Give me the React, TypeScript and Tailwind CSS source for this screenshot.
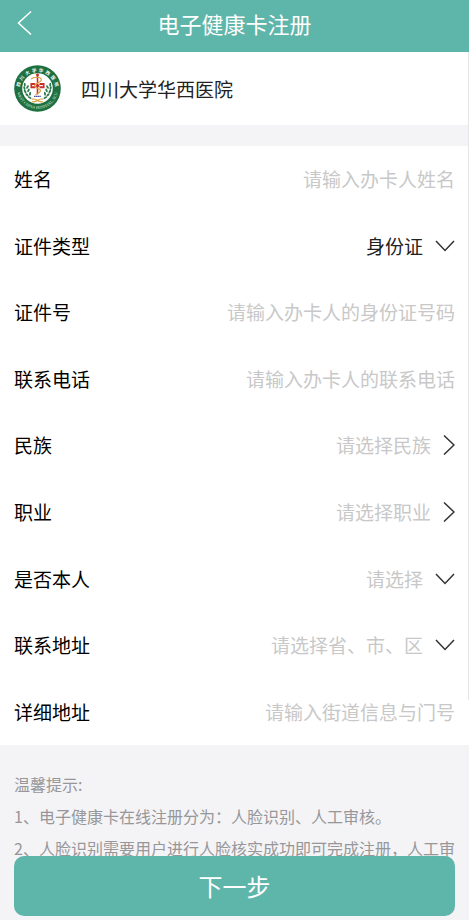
import { useState } from "react";

type Field = {
  id: string;
  label: string;
  kind: "text" | "select" | "picker";
  hint: string;
  options?: string[];
  value?: string;
};

const fields: Field[] = [
  { id: "name", label: "姓名", kind: "text", hint: "请输入办卡人姓名" },
  { id: "idType", label: "证件类型", kind: "select", hint: "", options: ["身份证"], value: "身份证" },
  { id: "idNumber", label: "证件号", kind: "text", hint: "请输入办卡人的身份证号码" },
  { id: "phone", label: "联系电话", kind: "text", hint: "请输入办卡人的联系电话" },
  { id: "ethnicity", label: "民族", kind: "picker", hint: "请选择民族" },
  { id: "job", label: "职业", kind: "picker", hint: "请选择职业" },
  { id: "self", label: "是否本人", kind: "select", hint: "请选择" },
  { id: "region", label: "联系地址", kind: "select", hint: "请选择省、市、区" },
  { id: "address", label: "详细地址", kind: "text", hint: "请输入街道信息与门号" },
];

function ChevronDown() {
  return (
    <svg className="pointer-events-none h-3 w-5 shrink-0" viewBox="0 0 20 12" fill="none" stroke="#333333" strokeWidth="1.5" aria-hidden="true">
      <path d="M1 1 10 10.5 19 1" />
    </svg>
  );
}

function ChevronRight() {
  return (
    <svg className="h-5 w-3 shrink-0" viewBox="0 0 12 20" fill="none" stroke="#333333" strokeWidth="1.5" aria-hidden="true">
      <path d="M1 .5 11 10 1 19.5" />
    </svg>
  );
}

function Emblem() {
  const leaves = [
    [11, 20, -4],
    [10.6, 23.5, -16],
    [11.4, 27, -30],
    [13.2, 30.4, -45],
    [16, 33.2, -60],
    [13.8, 22.5, 32],
    [14.8, 26, 25],
    [16.4, 29.4, 10],
  ];
  const branch = leaves.map(([x, y, r]) => (
    <ellipse key={`${x}-${y}`} cx={x} cy={y} rx="1" ry="2" transform={`rotate(${r} ${x} ${y})`} />
  ));
  return (
    <svg className="size-[47px] shrink-0" viewBox="0 0 48 48" role="img" aria-label="四川大学华西医院">
      <defs>
        <path id="ringTop" d="M6.200 30A18.400 18.400 0 1 1 41.800 30" />
        <path id="ringBottom" d="M3.100 24A20.900 20.900 0 0 0 44.900 24" />
      </defs>
      <circle cx="24" cy="24" r="23.8" fill="#1f7040" />
      <circle cx="24" cy="24" r="15.6" fill="#ffffff" />
      <text fill="#ffffff" fontSize="4.6" fontWeight="700" textAnchor="middle">
        <textPath href="#ringTop" startOffset="50%">四&#160;&#160;川&#160;&#160;大&#160;&#160;学&#160;&#160;华&#160;&#160;西&#160;&#160;医&#160;&#160;院</textPath>
      </text>
      <text fill="#d5e8db" fontSize="4.2" textAnchor="middle" fontFamily="Liberation Serif, serif">
        <textPath href="#ringBottom" startOffset="50%">WEST CHINA HOSPITAL, SCU</textPath>
      </text>
      <g fill="#2c7a4c">
        {branch}
        <g transform="translate(48 0) scale(-1 1)">{branch}</g>
      </g>
      <path d="M16.800 18.500h5V20h4.400v-1.500h5v5.200h-5v-1.500h-4.400v1.500h-5z" fill="#cc2a2b" />
      <path d="M18.500 20.500h3.800v1.200h-3.800zM25.700 20.500h3.800v1.200h-3.800z" fill="#ffffff" />
      <path d="M23.200 11h1.600v19h-1.600z" fill="#cc2a2b" />
      <circle cx="24" cy="10.300" r="1.500" fill="#cc2a2b" />
      <path d="M17.500 14.500c2.500-3 10-2.500 10.500.5s-7.500 3.500-7 6.500 6.500 2 6 5-4 2.500-5 4" fill="none" stroke="#d9a13c" strokeWidth="1.200" />
      <path d="M20.500 32h7" stroke="#3c4a9c" strokeWidth="1.400" strokeDasharray="1.400 .4" />
      <path d="M18 34.800q4.500-.5 6 1.500 1.500-2 6-1.500M18.500 37.500q3.500.5 5.500-1.500 2 2 5.500 1.500" fill="none" stroke="#d9a13c" strokeWidth="1.200" />
    </svg>
  );
}

function FieldRow({ field }: { field: Field }) {
  const [value, setValue] = useState(field.value ?? "");
  return (
    <div className="flex items-center">
      <label htmlFor={field.id} className="shrink-0 text-black">
        {field.label}
      </label>
      {field.kind === "text" && (
        <input
          id={field.id}
          type="text"
          value={value}
          onChange={(e) => setValue(e.target.value)}
          placeholder={field.hint}
          className="min-w-0 flex-1 bg-transparent text-right text-[#222222] outline-none placeholder:text-[#c8c8c8]"
        />
      )}
      {field.kind === "select" && (
        <div className="flex min-w-0 flex-1 items-center gap-3">
          <select
            id={field.id}
            value={value}
            onChange={(e) => setValue(e.target.value)}
            className={`min-w-0 flex-1 appearance-none bg-transparent text-right [text-align-last:right] outline-none ${
              value ? "text-[#222222]" : "text-[#c8c8c8]"
            }`}
          >
            {field.hint && <option value="">{field.hint}</option>}
            {field.options?.map((option) => (
              <option key={option} value={option}>
                {option}
              </option>
            ))}
          </select>
          <ChevronDown />
        </div>
      )}
      {field.kind === "picker" && (
        <button id={field.id} type="button" className="flex flex-1 items-center justify-end gap-3 text-[#c8c8c8]">
          {field.hint}
          <ChevronRight />
        </button>
      )}
    </div>
  );
}

export default function App() {
  return (
    <div className="relative min-h-screen bg-[#f4f3f6] font-['Noto_Sans_CJK_SC',sans-serif]">
      <header className="grid h-13 grid-cols-[1fr_auto_1fr] items-center bg-[#5eb5a9] px-4 pb-[6px] text-white">
        <button type="button" aria-label="返回" className="justify-self-start">
          <svg className="h-6 w-4" viewBox="0 0 16 24" fill="none" stroke="currentColor" strokeWidth="1.500" aria-hidden="true">
            <path d="M15 .5 2.500 12 15 23.500" />
          </svg>
        </button>
        <h1 className="text-[22px] leading-8">电子健康卡注册</h1>
      </header>

      <section className="flex h-[73px] items-center gap-5 bg-white px-[14px]">
        <Emblem />
        <p className="text-[19px] leading-7 text-[#222222]">四川大学华西医院</p>
      </section>

      <form className="mt-[21px] grid min-h-[599px] auto-rows-fr bg-white px-[14px] text-[19px] leading-7">
        {fields.map((field) => (
          <FieldRow key={field.id} field={field} />
        ))}
      </form>

      <section className="overflow-hidden px-[14px] pt-[23px] text-base leading-8 text-[#979799]">
        <h2>温馨提示:</h2>
        <ol>
          <li>1、电子健康卡在线注册分为：人脸识别、人工审核。</li>
          <li className="whitespace-nowrap">2、人脸识别需要用户进行人脸核实成功即可完成注册，人工审</li>
        </ol>
      </section>

      <div className="absolute top-13 right-0 h-[648px] w-px bg-[#e6e6ea]" />

      <div className="fixed inset-x-0 bottom-1 px-[14px]">
        <button type="button" className="h-15 w-full rounded-[10px] bg-[#5eb5a9] text-2xl text-white">
          下一步
        </button>
      </div>
    </div>
  );
}
